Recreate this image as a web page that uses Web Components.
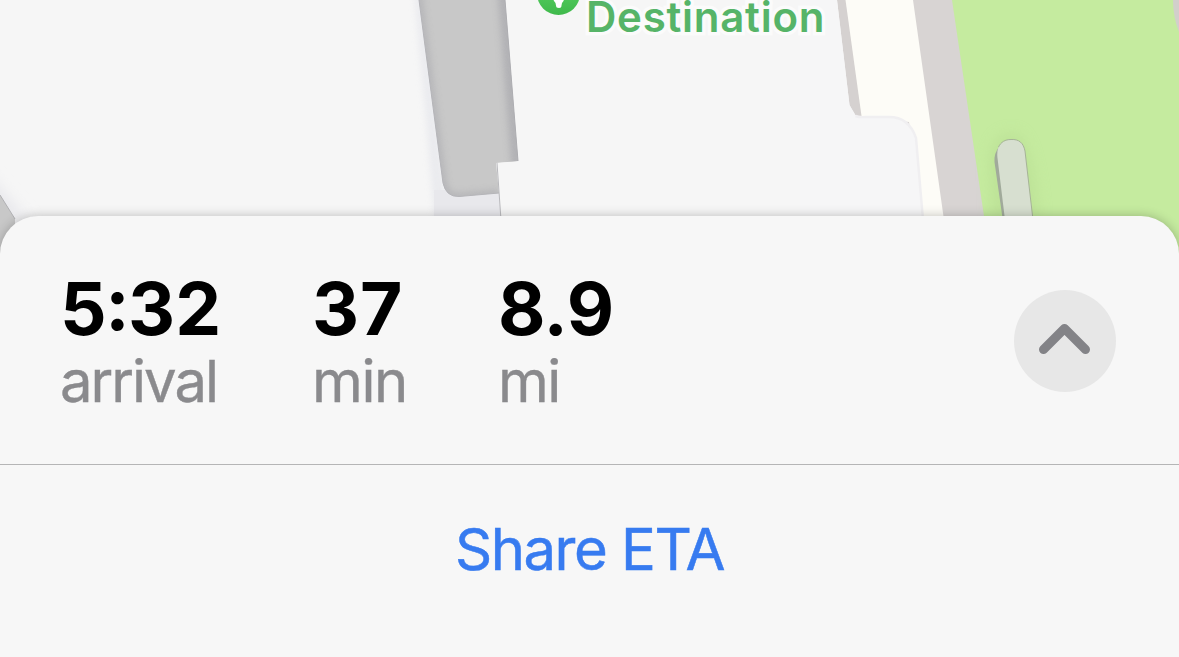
<!DOCTYPE html>
<html lang="en">
<head>
<meta charset="utf-8">
<title>Navigation</title>
<style>
  body {
    margin: 0;
    height: 657px;
    overflow: hidden;
    background: #f7f7f7;
    font-family: Inter, "Liberation Sans", sans-serif;
  }
</style>
</head>
<body>
<nav-screen>
  <map-view slot="map"><map-label>Destination</map-label></map-view>
  <eta-sheet>
    <trip-metric slot="metrics" value="5:32" style="--value-spacing: 0; --label-spacing: -2px">arrival</trip-metric>
    <trip-metric slot="metrics" value="37" style="--value-spacing: 1px; --label-spacing: -1.400px">min</trip-metric>
    <trip-metric slot="metrics" value="8.9" style="--value-spacing: -0.400px; --label-spacing: -1.500px">mi</trip-metric>
    <expand-button slot="toggle"></expand-button>
    <sheet-action>Share ETA</sheet-action>
  </eta-sheet>
</nav-screen>

<script>
/** Attach an open shadow root filled with the given markup. */
function render(host, html) {
  const template = document.createElement('template');
  template.innerHTML = html;
  host.attachShadow({ mode: 'open' }).appendChild(template.content.cloneNode(true));
}

/** <nav-screen> stacks the map above the trip sheet. */
class NavScreen extends HTMLElement {
  constructor() {
    super();
    render(this, `
      <style>
        :host { display: grid; grid-template-rows: 216px 441px; height: 657px; }
      </style>
      <slot name="map"></slot>
      <slot></slot>
    `);
  }
}

/** <map-view> draws the buildings, the road and the park. */
class MapView extends HTMLElement {
  constructor() {
    super();
    render(this, `
      <style>
        :host { display: block; position: relative; height: 270px; overflow: hidden; }
        svg { display: block; }
        ::slotted(map-label) { position: absolute; left: 537px; top: -28px; }
      </style>
      <svg width="1179" height="270" viewBox="0 0 1179 270">
        <defs>
          <filter id="soft" filterUnits="userSpaceOnUse" x="-60" y="-60" width="1300" height="400"><feGaussianBlur stdDeviation="7"/></filter>
          <filter id="edge" filterUnits="userSpaceOnUse" x="-60" y="-60" width="1300" height="400"><feGaussianBlur stdDeviation="3"/></filter>
          <clipPath id="yardClip"><path d="M419 0H505L518 161L496 163L499 193L459 196.500Q446 197 443 183Z"/></clipPath>
        </defs>
        <rect width="1179" height="270" fill="#f6f6f6"/>

        <!-- corner building, lower left -->
        <path d="M-20 165L30 222H-20Z" fill="#e8e8ec" filter="url(#soft)"/>
        <path d="M0 195L15 219V270H0Z" fill="#c8c8c8"/>
        <path d="M0 195L15 219" stroke="#b0b0b3" fill="none"/>

        <!-- courtyard between the buildings -->
        <path d="M414 -10H421L444 184V240H436L427 130Z" fill="#e6e7ec" filter="url(#edge)" opacity=".75"/>
        <path d="M434 190H500V220H434Z" fill="#e8e8ec"/>
        <path d="M419 0H505L518 161L496 163L499 193L459 196.500Q446 197 443 183Z" fill="#c8c8c8"/>
        <g clip-path="url(#yardClip)">
          <path d="M504 -10L518 170" stroke="#aaaaaf" stroke-width="13" filter="url(#edge)" opacity=".75"/>
          <path d="M418 -10L443 183Q446 197 459 196.500L499 193" fill="none" stroke="#a9a9ae" stroke-width="7" filter="url(#edge)" opacity=".6"/>
        </g>
        <path d="M419 0L443 183Q446 197 459 196.500L499 193" fill="none" stroke="#b5b5b9" stroke-width="1"/>
        <path d="M505 0L518 161" stroke="#adadb1" stroke-width="1"/>
        <path d="M497 163L501 220H530V161Z" fill="#f6f6f6"/>
        <path d="M497 163L501 220" stroke="#b9b9bd"/>

        <!-- road and pavement -->
        <path d="M836 0H850L866 116L917 220H986L953 0Z" fill="#d8d4d3"/>
        <path d="M845 0H913L944 220H922L909 122L861 117Z" fill="#fdfcf7"/>
        <path d="M837 0H845.500L861.500 116H855.500L849.500 105Z" fill="#d5d1d0"/>
        <path d="M800 0H837L849.500 105L855.500 115Q859 117.500 866 117H889Q909 117 916 138L923 220H800Z" fill="#f6f6f7"/>
        <path d="M855.500 116Q859 117.500 866 117H889Q909 117 916 138L923 220" fill="none" stroke="#f0eff1" stroke-width="2.500"/>

        <!-- park -->
        <path d="M952 0H1179V270H991L984 216Z" fill="#c5eb9f"/>
        <path d="M1173 0H1179V32Q1173 17 1173 0Z" fill="#d2cfcb"/>
        <path d="M992 220L990 160Q993 132 1014 133Q1032 135 1039 220Z" fill="#b5da90" opacity=".5" filter="url(#soft)"/>
        <path d="M1002.500 218L994.500 162Q994 153 999 147L1009 218Z" fill="#a1aa9b"/>
        <path d="M1005 220L997.500 158C996 146 1002 139.500 1011 139.500C1019 139 1023.500 143 1025 151L1033 220Z" fill="#d7dfd0"/>
        <path d="M998.500 147C1001 142 1005 139.500 1011 139.500C1019 139 1023.500 143 1025 151L1033 220" fill="none" stroke="#a6b497" stroke-width="1"/>
      </svg>
      <slot></slot>
    `);
  }
}

/** <map-label> is a map pin with its haloed caption. */
class MapLabel extends HTMLElement {
  constructor() {
    super();
    render(this, `
      <style>
        :host { display: flex; gap: 6px; color: #56b468; }
        svg { flex: none; }
        .text {
          margin-top: 19px;
          font-size: 42px;
          font-weight: 600;
          line-height: 52px;
          letter-spacing: 0.750px;
          white-space: nowrap;
          -webkit-text-stroke: 7px #fbfbfb;
          paint-order: stroke fill;
        }
      </style>
      <svg width="43" height="43" viewBox="0 0 43 43">
        <defs>
          <linearGradient id="pin" x2="0" y2="1">
            <stop offset="0" stop-color="#62d86b"/>
            <stop offset="1" stop-color="#3fb94b"/>
          </linearGradient>
        </defs>
        <circle cx="21.500" cy="21.500" r="21.500" fill="url(#pin)"/>
        <path d="M15 24H28L26.500 29Q24.500 30.500 24.500 33.500Q24.500 36 22 36Q19 36 19 33.500Q19 30.500 17 29Z" fill="#fff"/>
      </svg>
      <span class="text"><slot></slot></span>
    `);
  }
}

/** <eta-sheet> holds the trip metrics, the toggle and an action row. */
class EtaSheet extends HTMLElement {
  constructor() {
    super();
    render(this, `
      <style>
        :host {
          display: grid;
          grid-template-rows: 248px 1fr;
          box-sizing: border-box;
          position: relative;
          background: #f7f7f7;
          border-radius: 38px 38px 0 0;
          box-shadow: 0 0 11px rgba(0, 0, 0, 0.240);
        }
        header {
          display: flex;
          justify-content: space-between;
          align-items: center;
          padding: 2px 63px 0 60px;
        }
        .metrics { display: grid; grid-template-columns: 252px 186px auto; }
        footer { border-top: 1px solid #b5b5b6; }
      </style>
      <header>
        <div class="metrics"><slot name="metrics"></slot></div>
        <slot name="toggle"></slot>
      </header>
      <footer><slot></slot></footer>
    `);
  }
}

/** <trip-metric value="..."> shows a bold value over its unit. */
class TripMetric extends HTMLElement {
  constructor() {
    super();
    render(this, `
      <style>
        :host { display: flex; flex-direction: column; gap: 6px; white-space: nowrap; }
        .value {
          color: #000;
          font-size: 73px;
          font-weight: 700;
          line-height: 73px;
          letter-spacing: var(--value-spacing, 0);
        }
        /* lifts the colon to the middle of the digits */
        .colon { position: relative; top: -5px; margin: 0 -1.500px; }
        .label {
          color: #8a8a8d;
          font-size: 58px;
          line-height: 60px;
          letter-spacing: var(--label-spacing, 0);
          -webkit-text-stroke: 0.400px #8a8a8d;
        }
      </style>
      <span class="value"></span>
      <span class="label"><slot></slot></span>
    `);
  }

  connectedCallback() {
    const value = this.getAttribute('value');
    this.shadowRoot.querySelector('.value').innerHTML = value.replace(':', '<span class="colon">:</span>');
  }
}

/** <expand-button> is the round chevron toggle. */
class ExpandButton extends HTMLElement {
  constructor() {
    super();
    render(this, `
      <style>
        :host { display: block; }
        button {
          display: grid;
          place-items: center;
          width: 102px;
          height: 102px;
          padding: 0;
          border: 0;
          border-radius: 50%;
          background: #e7e7e7;
        }
      </style>
      <button aria-label="Expand">
        <svg width="102" height="102" viewBox="0 0 102 102" fill="none" stroke="#838387" stroke-width="9" stroke-linecap="round" stroke-linejoin="round">
          <path d="M29.500 59.500L50.500 38.500L71.500 59.500"/>
        </svg>
      </button>
    `);
  }
}

/** <sheet-action> is a centred text button. */
class SheetAction extends HTMLElement {
  constructor() {
    super();
    render(this, `
      <style>
        :host { display: flex; justify-content: center; padding-top: 54px; }
        button {
          padding: 0;
          border: 0;
          background: none;
          color: #377bf0;
          font: 400 58px/60px Inter, "Liberation Sans", sans-serif;
          letter-spacing: -1.500px;
          -webkit-text-stroke: 0.500px #377bf0;
        }
      </style>
      <button><slot></slot></button>
    `);
  }
}

customElements.define('nav-screen', NavScreen);
customElements.define('map-view', MapView);
customElements.define('map-label', MapLabel);
customElements.define('eta-sheet', EtaSheet);
customElements.define('trip-metric', TripMetric);
customElements.define('expand-button', ExpandButton);
customElements.define('sheet-action', SheetAction);
</script>
</body>
</html>
